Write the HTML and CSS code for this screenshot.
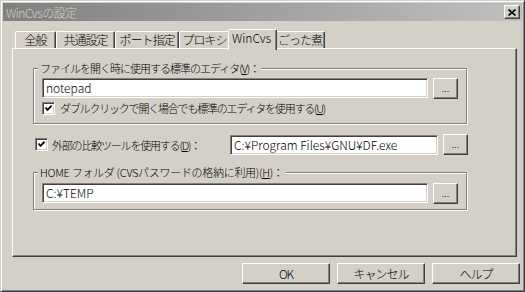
FILE: index.html
```html
<!DOCTYPE html>
<html lang="ja">

<head>
    <meta charset="UTF-8" />
    <title>WinCvsの設定</title>
    <link rel="stylesheet" href="styles.css">
</head>

<body>
    <div class="window">
        <div class="titlebar">
            <span class="title">WinCvsの設定</span>
            <span class="close-btn">
                <svg width="8" height="7" viewBox="0 0 8 7">
                    <path d="M0.5 0.5 L7.5 6.5 M7.5 0.5 L0.5 6.5" stroke="#000" stroke-width="1.6" fill="none" />
                </svg>
            </span>
        </div>

        <div class="content">
            <div class="tabs">
                <div class="tab w1">全般</div>
                <div class="tab w2">共通設定</div>
                <div class="tab w3">ポート指定</div>
                <div class="tab w4">プロキシ</div>
                <div class="tab w5 active">WinCvs</div>
                <div class="tab w6">ごった煮</div>
            </div>

            <div class="panel">
                <fieldset class="group group-editor">
                    <legend>ファイルを開く時に使用する標準のエディタ(<u>V</u>)：</legend>
                    <div class="field-row">
                        <div class="textbox wide">notepad</div>
                        <div class="btn small">...</div>
                    </div>
                    <div class="check-row">
                        <span class="checkbox">
                            <svg width="9" height="9" viewBox="0 0 9 9">
                                <path d="M1.5 3.5 L3.5 5.8 L7.6 1.6" stroke="#000" stroke-width="1.8" fill="none" />
                            </svg>
                        </span>
                        <span class="check-label">ダブルクリックで開く場合でも標準のエディタを使用する(<u>U</u>)</span>
                    </div>
                </fieldset>

                <div class="diff-row">
                    <div class="diff-label">
                        <span class="checkbox">
                            <svg width="9" height="9" viewBox="0 0 9 9">
                                <path d="M1.5 3.5 L3.5 5.8 L7.6 1.6" stroke="#000" stroke-width="1.8" fill="none" />
                            </svg>
                        </span>
                        <span class="check-label">外部の比較ツールを使用する(<u>D</u>)：</span>
                    </div>
                    <div class="textbox diff-path">C:¥Program Files¥GNU¥DF.exe</div>
                    <div class="btn small">...</div>
                </div>

                <fieldset class="group group-home">
                    <legend>HOME フォルダ (CVSパスワードの格納に利用)(<u>H</u>)：</legend>
                    <div class="field-row">
                        <div class="textbox wide">C:¥TEMP</div>
                        <div class="btn small">...</div>
                    </div>
                </fieldset>
            </div>

            <div class="footer">
                <div class="btn push">OK</div>
                <div class="btn push">キャンセル</div>
                <div class="btn push">ヘルプ</div>
            </div>
        </div>
    </div>
</body>

</html>
```

FILE: styles.css
```css
* {
    box-sizing: border-box;
}

body {
    margin: 0;
    background: #d4d0c8;
    font-family: "Noto Sans CJK JP", "DejaVu Sans", sans-serif;
    font-size: 11px;
    font-weight: 300;
    color: #000;
}

.window {
    width: 525px;
    height: 292px;
    background: #d4d0c8;
    border: 1px solid;
    border-color: #d4d0c8 #404040 #404040 #d4d0c8;
    box-shadow: inset 1px 1px #fff, inset -1px -1px #808080;
    padding: 2px;
    display: flex;
    flex-direction: column;
}

/* Title bar */
.titlebar {
    height: 18px;
    background: linear-gradient(to right, #808080, #c0c0c0);
    display: flex;
    align-items: center;
    justify-content: space-between;
    padding: 0 2px 0 3px;
}

.title {
    color: #d4d0c8;
    font-size: 12px;
    letter-spacing: -0.5px;
}

.close-btn {
    width: 16px;
    height: 14px;
    background: #d4d0c8;
    border: 1px solid;
    border-color: #fff #404040 #404040 #fff;
    box-shadow: inset -1px -1px #808080;
    display: flex;
    align-items: center;
    justify-content: center;
}

.content {
    padding: 8px 0 0 9px;
}

/* Tabs */
.tabs {
    display: flex;
    align-items: flex-end;
    height: 19px;
    padding-left: 3px;
    position: relative;
    z-index: 1;
}

.tab {
    height: 17px;
    border-top: 1px solid #fff;
    border-left: 1px solid #fff;
    border-right: 1px solid #404040;
    box-shadow: inset -1px 0 #808080;
    border-radius: 2px 2px 0 0;
    text-align: center;
    line-height: 16px;
    font-size: 12px;
    letter-spacing: -1px;
    background: #d4d0c8;
}

.w1 { width: 41px; }
.w2 { width: 59px; }
.w3 { width: 64px; }
.w4 { width: 51px; }
.w5 { width: 49px; }
.w6 { width: 50px; }

.tab.active {
    height: 21px;
    margin: 0 -2px -2px;
    position: relative;
    z-index: 2;
    line-height: 16px;
    letter-spacing: 0;
    padding-right: 2px;
}

/* Panel */
.panel {
    width: 505px;
    height: 209px;
    border-top: 1px solid #fff;
    border-left: 1px solid #fff;
    border-right: 1px solid #404040;
    border-bottom: 1px solid #404040;
    box-shadow: inset -1px -1px #808080;
    padding: 12px 0 0 20px;
}

.group {
    width: 434px;
    margin: 0;
    padding: 0 8px 8px 8px;
    border: 1px solid #808080;
    box-shadow: inset 1px 1px #fff, 1px 1px #fff;
    min-width: 0;
}

.group legend {
    margin-left: -4px;
    padding: 0 2px;
    height: 14px;
    line-height: 14px;
    background: #d4d0c8;
    letter-spacing: -1px;
}

.group-home {
    margin-top: 10px;
    padding-bottom: 5px;
}

.group-home legend {
    letter-spacing: -0.3px;
}

.field-row {
    display: flex;
    gap: 5px;
    margin-top: 3px;
}

.group-home .field-row {
    margin-top: 4px;
}

.textbox {
    height: 20px;
    background: #fff;
    border: 1px solid;
    border-color: #808080 #fff #fff #808080;
    box-shadow: inset 1px 1px #404040, inset -1px -1px #d4d0c8;
    padding: 0 3px;
    line-height: 18px;
    font-size: 12px;
    white-space: nowrap;
}

.wide {
    width: 386px;
}

.btn {
    background: #d4d0c8;
    border: 1px solid;
    border-color: #fff #404040 #404040 #fff;
    box-shadow: inset -1px -1px #808080;
    display: flex;
    align-items: center;
    justify-content: center;
}

.btn.small {
    width: 25px;
    height: 21px;
    font-size: 10px;
    padding-bottom: 2px;
}

.check-row {
    display: flex;
    align-items: center;
    gap: 5px;
    height: 14px;
    margin-top: 2px;
}

.checkbox {
    width: 13px;
    height: 13px;
    flex: none;
    background: #fff;
    border: 1px solid;
    border-color: #808080 #fff #fff #808080;
    box-shadow: inset 1px 1px #404040, inset -1px -1px #d4d0c8;
    display: flex;
    align-items: center;
    justify-content: center;
}

.check-label {
    letter-spacing: -1.2px;
    white-space: nowrap;
}

.diff-row {
    display: flex;
    align-items: center;
    height: 21px;
    margin-top: 10px;
}

.diff-label {
    width: 197px;
    display: flex;
    align-items: center;
    gap: 4px;
    padding-left: 2px;
}

.diff-path {
    width: 208px;
    margin-right: 5px;
}

/* Footer buttons */
.footer {
    display: flex;
    justify-content: flex-end;
    gap: 7px;
    margin-top: 6px;
    padding-right: 2px;
}

.btn.push {
    width: 88px;
    height: 21px;
    font-size: 12px;
    letter-spacing: -1px;
}
```
